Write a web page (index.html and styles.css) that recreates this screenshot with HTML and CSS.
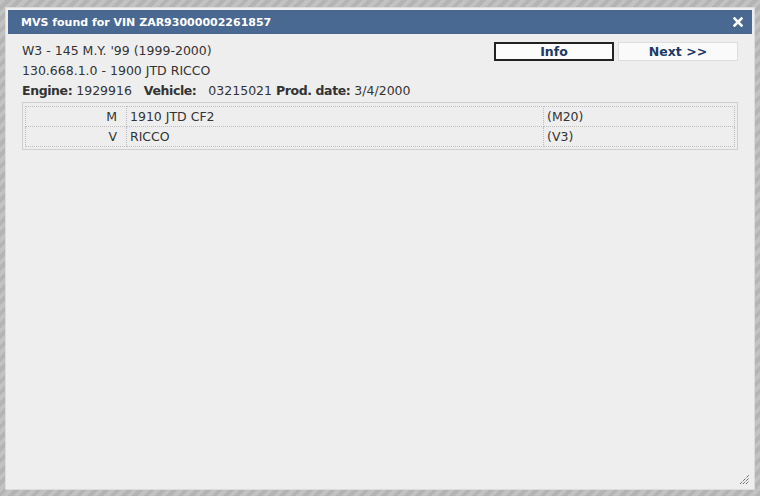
FILE: index.html
```html
<!DOCTYPE html>
<html>
<head>
<meta charset="utf-8">
<link rel="stylesheet" href="styles.css">
</head>
<body>
<div class="backdrop">
  <div class="dialog">
    <div class="titlebar">
      <span class="title">MVS found for VIN ZAR93000002261857</span>
      <span class="close">
        <svg width="10" height="10" viewBox="0 0 10 10">
          <path d="M1.5 1.5 L8.5 8.5 M8.5 1.5 L1.5 8.5" stroke="#fff" stroke-width="2.6" stroke-linecap="square" fill="none"/>
        </svg>
      </span>
    </div>
    <div class="content">
      <div class="head">
        <div class="info">
          <div class="line">W3 - 145 M.Y. '99 (1999-2000)</div>
          <div class="line">130.668.1.0 - 1900 JTD RICCO</div>
          <div class="line"><b>Engine:</b> 1929916&nbsp;&nbsp; <b>Vehicle:</b>&nbsp;&nbsp; 03215021 <b>Prod. date:</b> 3/4/2000</div>
        </div>
        <div class="buttons">
          <button class="btn btn-active">Info</button>
          <button class="btn">Next &gt;&gt;</button>
        </div>
      </div>
      <div class="tablewrap">
        <table class="mvs">
          <tr><td class="c1">M</td><td class="c2">1910 JTD CF2</td><td class="c3">(M20)</td></tr>
          <tr><td class="c1">V</td><td class="c2">RICCO</td><td class="c3">(V3)</td></tr>
        </table>
      </div>
    </div>
    <div class="grip">
      <svg width="11" height="11" viewBox="0 0 11 11">
        <path d="M1 10 L10 1 M4 10 L10 4 M7 10 L10 7" stroke="#333" stroke-width="1" stroke-dasharray="1 1" fill="none"/>
      </svg>
    </div>
  </div>
</div>
</body>
</html>
```
FILE: styles.css
```css
html, body {
  margin: 0;
  padding: 0;
  width: 760px;
  height: 496px;
  overflow: hidden;
}
body {
  background: repeating-linear-gradient(135deg, #c2c2c2 0 4px, #b4b4b4 4px 8px);
  font-family: "DejaVu Sans", Verdana, sans-serif;
}
.backdrop {
  padding: 7px 5px;
}
.dialog {
  position: relative;
  width: 744px;
  height: 477px;
  background: #eeeeee;
  border: 1px solid #dcdcdc;
  padding: 2px;
  box-sizing: content-box;
}
.titlebar {
  height: 24px;
  background: #4a6992;
  color: #fff;
  display: flex;
  align-items: center;
  justify-content: space-between;
  padding: 0 9px 0 13px;
}
.title {
  font-weight: bold;
  font-size: 11px;
}
.close {
  display: flex;
}
.close svg {
  display: block;
}
.content {
  padding: 7px 14px 0 14px;
}
.head {
  display: flex;
  justify-content: space-between;
  align-items: flex-start;
}
.line {
  font-size: 12.5px;
  line-height: 20px;
  color: #333;
}
.line b {
  letter-spacing: -0.4px;
}
.buttons {
  display: flex;
  gap: 4px;
  padding-top: 1px;
}
.btn {
  width: 120px;
  height: 19px;
  background: #fafafa;
  border: 1px solid #ddd;
  color: #1b3a66;
  font-family: "DejaVu Sans", Verdana, sans-serif;
  font-weight: bold;
  font-size: 12.5px;
  padding: 0;
  line-height: 17px;
}
.btn-active {
  border: 2px solid #222;
  background: #fcfcfc;
  line-height: 15px;
}
.tablewrap {
  margin-top: 1px;
  border: 1px solid #cfcfcf;
  padding: 3px 2px 2px 2px;
}
.mvs {
  width: 100%;
  border-collapse: collapse;
  font-size: 12.5px;
  color: #333;
}
.mvs td {
  height: 19px;
  padding: 0 3px;
  border-right: 1px dotted #bdbdbd;
  border-bottom: 1px dotted #bdbdbd;
}
.mvs td.c1 {
  width: 88px;
  text-align: right;
  padding-right: 9px;
  border-left: 1px dotted #bdbdbd;
}
.mvs td.c2 {
  width: 410px;
}
.mvs tr:first-child td {
  border-top: 1px dotted #bdbdbd;
}
.grip {
  position: absolute;
  right: 4px;
  bottom: 4px;
  width: 11px;
  height: 11px;
}
.grip svg {
  display: block;
}
```
